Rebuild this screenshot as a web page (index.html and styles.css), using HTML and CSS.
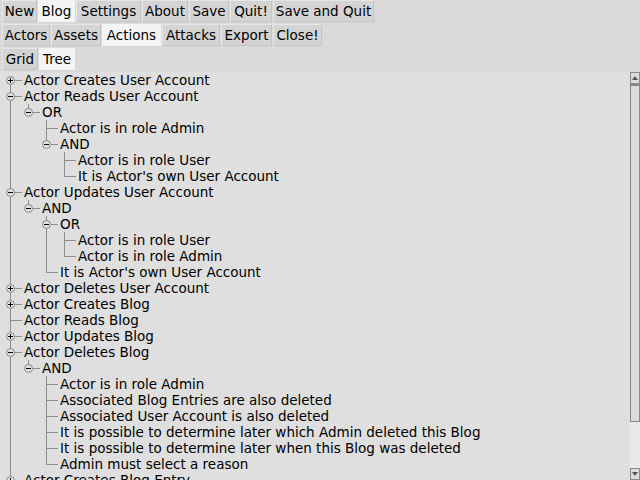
FILE: index.html
```html
<!DOCTYPE html>
<html>
<head>
<meta charset="utf-8">
<link rel="stylesheet" href="styles.css">
</head>
<body>
<div class="app">
  <div class="tabs">
    <span class="btn b-new">New</span><span class="btn sel b-blog">Blog</span><span class="btn b-settings">Settings</span><span class="btn b-about">About</span><span class="btn b-save">Save</span><span class="btn b-quit">Quit!</span><span class="btn b-saq">Save and Quit</span>
  </div>
  <div class="tabs">
    <span class="btn b-actors">Actors</span><span class="btn b-assets">Assets</span><span class="btn sel b-actions">Actions</span><span class="btn b-attacks">Attacks</span><span class="btn b-export">Export</span><span class="btn b-close">Close!</span>
  </div>
  <div class="tabs">
    <span class="btn b-grid">Grid</span><span class="btn sel b-tree">Tree</span>
  </div>
  <div class="treebox">
    <div class="tree">
      <div class="row"><span class="c tee first"><i class="exp plus"></i></span><span class="t">Actor Creates User Account</span></div>
      <div class="row"><span class="c tee"><i class="exp minus"></i></span><span class="t">Actor Reads User Account</span></div>
      <div class="row"><span class="c pipe"></span><span class="c elbow"><i class="exp minus"></i></span><span class="t">OR</span></div>
      <div class="row"><span class="c pipe"></span><span class="c"></span><span class="c tee"></span><span class="t">Actor is in role Admin</span></div>
      <div class="row"><span class="c pipe"></span><span class="c"></span><span class="c elbow"><i class="exp minus"></i></span><span class="t">AND</span></div>
      <div class="row"><span class="c pipe"></span><span class="c"></span><span class="c"></span><span class="c tee"></span><span class="t">Actor is in role User</span></div>
      <div class="row"><span class="c pipe"></span><span class="c"></span><span class="c"></span><span class="c elbow"></span><span class="t">It is Actor's own User Account</span></div>
      <div class="row"><span class="c tee"><i class="exp minus"></i></span><span class="t">Actor Updates User Account</span></div>
      <div class="row"><span class="c pipe"></span><span class="c elbow"><i class="exp minus"></i></span><span class="t">AND</span></div>
      <div class="row"><span class="c pipe"></span><span class="c"></span><span class="c tee"><i class="exp minus"></i></span><span class="t">OR</span></div>
      <div class="row"><span class="c pipe"></span><span class="c"></span><span class="c pipe"></span><span class="c tee"></span><span class="t">Actor is in role User</span></div>
      <div class="row"><span class="c pipe"></span><span class="c"></span><span class="c pipe"></span><span class="c elbow"></span><span class="t">Actor is in role Admin</span></div>
      <div class="row"><span class="c pipe"></span><span class="c"></span><span class="c elbow"></span><span class="t">It is Actor's own User Account</span></div>
      <div class="row"><span class="c tee"><i class="exp plus"></i></span><span class="t">Actor Deletes User Account</span></div>
      <div class="row"><span class="c tee"><i class="exp plus"></i></span><span class="t">Actor Creates Blog</span></div>
      <div class="row"><span class="c tee"></span><span class="t">Actor Reads Blog</span></div>
      <div class="row"><span class="c tee"><i class="exp plus"></i></span><span class="t">Actor Updates Blog</span></div>
      <div class="row"><span class="c tee"><i class="exp minus"></i></span><span class="t">Actor Deletes Blog</span></div>
      <div class="row"><span class="c pipe"></span><span class="c elbow"><i class="exp minus"></i></span><span class="t">AND</span></div>
      <div class="row"><span class="c pipe"></span><span class="c"></span><span class="c tee"></span><span class="t">Actor is in role Admin</span></div>
      <div class="row"><span class="c pipe"></span><span class="c"></span><span class="c tee"></span><span class="t">Associated Blog Entries are also deleted</span></div>
      <div class="row"><span class="c pipe"></span><span class="c"></span><span class="c tee"></span><span class="t">Associated User Account is also deleted</span></div>
      <div class="row"><span class="c pipe"></span><span class="c"></span><span class="c tee"></span><span class="t">It is possible to determine later which Admin deleted this Blog</span></div>
      <div class="row"><span class="c pipe"></span><span class="c"></span><span class="c tee"></span><span class="t">It is possible to determine later when this Blog was deleted</span></div>
      <div class="row"><span class="c pipe"></span><span class="c"></span><span class="c elbow"></span><span class="t">Admin must select a reason</span></div>
      <div class="row"><span class="c tee"><i class="exp plus"></i></span><span class="t">Actor Creates Blog Entry</span></div>
    </div>
    <div class="sbar">
      <div class="sbtn up"><span class="tri"></span></div>
      <div class="thumb"></div>
      <div class="track"></div>
      <div class="sbtn down"><span class="tri"></span></div>
    </div>
  </div>
</div>
</body>
</html>
```

FILE: styles.css
```css
html, body {
  margin: 0;
  padding: 0;
  background: #d9d9d9;
}
.app {
  width: 640px;
  height: 480px;
  overflow: hidden;
  font-family: "DejaVu Sans", sans-serif;
  font-size: 13.5px;
  color: #000;
}
.tabs {
  display: flex;
  gap: 1px;
  padding: 0 0 2px 2px;
  height: 22px;
}
.btn {
  flex: none;
  height: 22px;
  box-sizing: border-box;
  line-height: 20px;
  text-align: center;
  background: #d4d4d4;
  border: 1px solid #e6e6e6;
  border-right-color: #c4c4c4;
  border-bottom-color: #c4c4c4;
  white-space: nowrap;
}
.btn.sel {
  background: #f4f4f4;
  border-color: #f4f4f4;
}
.b-new { width: 35px; }
.b-blog { width: 37px; }
.b-settings { width: 65px; }
.b-about { width: 46px; }
.b-save { width: 40px; }
.b-quit { width: 42px; }
.b-saq { width: 101px; }
.b-actors { width: 48px; }
.b-assets { width: 50px; }
.b-actions { width: 59px; }
.b-attacks { width: 58px; }
.b-export { width: 51px; }
.b-close { width: 49px; }
.b-grid { width: 36px; }
.b-tree { width: 36px; }
.treebox {
  display: flex;
  height: 408px;
  background: #dfdfdf;
}
.tree {
  flex: 1;
  overflow: hidden;
  padding-left: 1px;
}
.row {
  display: flex;
  height: 16px;
  line-height: 16px;
  white-space: nowrap;
}
.c {
  position: relative;
  flex: none;
  width: 18px;
  height: 16px;
}
.pipe::before, .tee::before, .elbow::before {
  content: "";
  position: absolute;
  left: 9px;
  top: 0;
  width: 1px;
  height: 16px;
  background: #8e8e8e;
}
.elbow::before { height: 8px; }
.first::before { top: 8px; height: 8px; }
.tee::after, .elbow::after {
  content: "";
  position: absolute;
  left: 9px;
  top: 8px;
  width: 12px;
  height: 1px;
  background: #8e8e8e;
}
.t {
  padding-left: 5px;
}
.exp {
  position: absolute;
  left: 5px;
  top: 4px;
  width: 9px;
  height: 9px;
  box-sizing: border-box;
  border: 1px solid #8a8a8a;
  border-radius: 50%;
  background: #dfdfdf;
  z-index: 1;
}
.exp::before {
  content: "";
  position: absolute;
  left: 1px;
  top: 3px;
  width: 5px;
  height: 1px;
  background: #000;
}
.exp.plus::after {
  content: "";
  position: absolute;
  left: 3px;
  top: 1px;
  width: 1px;
  height: 5px;
  background: #000;
}
.sbar {
  flex: none;
  width: 10px;
  display: flex;
  flex-direction: column;
}
.sbtn {
  height: 12px;
  box-sizing: border-box;
  border: 1px solid #888;
  background: #dcdcdc;
  display: flex;
  align-items: center;
  justify-content: center;
}
.tri {
  width: 0;
  height: 0;
  border-left: 3px solid transparent;
  border-right: 3px solid transparent;
}
.up .tri { border-bottom: 4px solid #555; }
.down .tri { border-top: 4px solid #555; }
.thumb {
  height: 338px;
  box-sizing: border-box;
  border: 1px solid #888;
  border-top-width: 2px;
  background: #dcdcdc;
}
.track {
  flex: 1;
  background: #e9e9e9;
}
```
